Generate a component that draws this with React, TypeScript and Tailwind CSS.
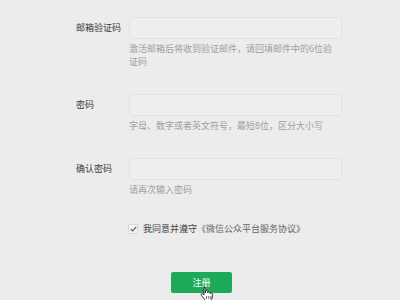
import React from 'react';

const font = { fontFamily: '"Noto Sans CJK SC", "Noto Sans", sans-serif' };

const Field = ({ label, hint, hintWidth }: { label: string; hint: string; hintWidth?: string }) => (
    <div className="flex">
        <div className="w-[53px] h-[22px] flex items-center text-[9px] text-[#3a3a3a]">{label}</div>
        <div className="flex flex-col">
            <div className="w-[213px] h-[22px] rounded-[2px] border border-[#e2e2e2] bg-[#eeeeee]" />
            <div className={`mt-[3px] text-[9px] leading-[13px] text-[#a0a0a0] ${hintWidth ?? 'w-[213px]'}`}>{hint}</div>
        </div>
    </div>
);

const HandCursor = () => (
    <svg width="14" height="16" viewBox="0 0 14 16" className="absolute left-[200px] top-[286px]">
        <path
            d="M4 1.2c.7 0 1.2.5 1.2 1.2V7l.3-.1V5.6c0-.6.5-1 1.1-1s1.1.4 1.1 1v1.2l.2-.1c0-.6.5-1 1.1-1s1.1.4 1.1 1v1l.2-.1c0-.6.5-1 1-1 .6 0 1 .5 1 1.1V11c0 2.2-1.6 4-3.8 4H7.5c-1.3 0-2.3-.6-3-1.6L1.3 9.2c-.3-.5-.2-1.1.3-1.4.5-.3 1.1-.2 1.4.2l.9 1.1V2.4c0-.7.3-1.2 1-1.2z"
            fill="#ffffff"
            stroke="#222222"
            strokeWidth="0.9"
        />
        <path d="M6.6 10v3M8.8 10v3M10.9 10v3" stroke="#222222" strokeWidth="0.7" />
    </svg>
);

export default function App() {
    return (
        <div className="relative w-[400px] h-[300px] overflow-hidden bg-[#ececec]" style={font}>
            <div className="pl-[76px] pt-[17px] flex flex-col">
                <Field label="邮箱验证码" hint="激活邮箱后将收到验证邮件，请回填邮件中的6位验证码" hintWidth="w-[206px]" />
                <div className="h-[26px]" />
                <Field label="密码" hint="字母、数字或者英文符号，最短8位，区分大小写" />
                <div className="h-[26px]" />
                <Field label="确认密码" hint="请再次输入密码" />

                <div className="ml-[52px] mt-[26px] flex items-center h-[13px]">
                    <div className="w-[10px] h-[10px] rounded-[1px] border border-[#d8d8d8] bg-[#f3f3f3] flex items-center justify-center">
                        <svg width="7" height="6" viewBox="0 0 7 6">
                            <path d="M0.8 3.2 2.7 5 6.2 0.9" fill="none" stroke="#555555" strokeWidth="1.1" />
                        </svg>
                    </div>
                    <span className="ml-[5px] text-[9px] text-[#444444]">
                        我同意并遵守<span className="text-[#666666]">《微信公众平台服务协议》</span>
                    </span>
                </div>

                <button className="ml-[95px] mt-[37px] w-[61px] h-[21px] rounded-[2px] bg-[#1dab5b] text-white text-[9px] flex items-center justify-center">
                    注册
                </button>
            </div>
            <HandCursor />
        </div>
    );
}
